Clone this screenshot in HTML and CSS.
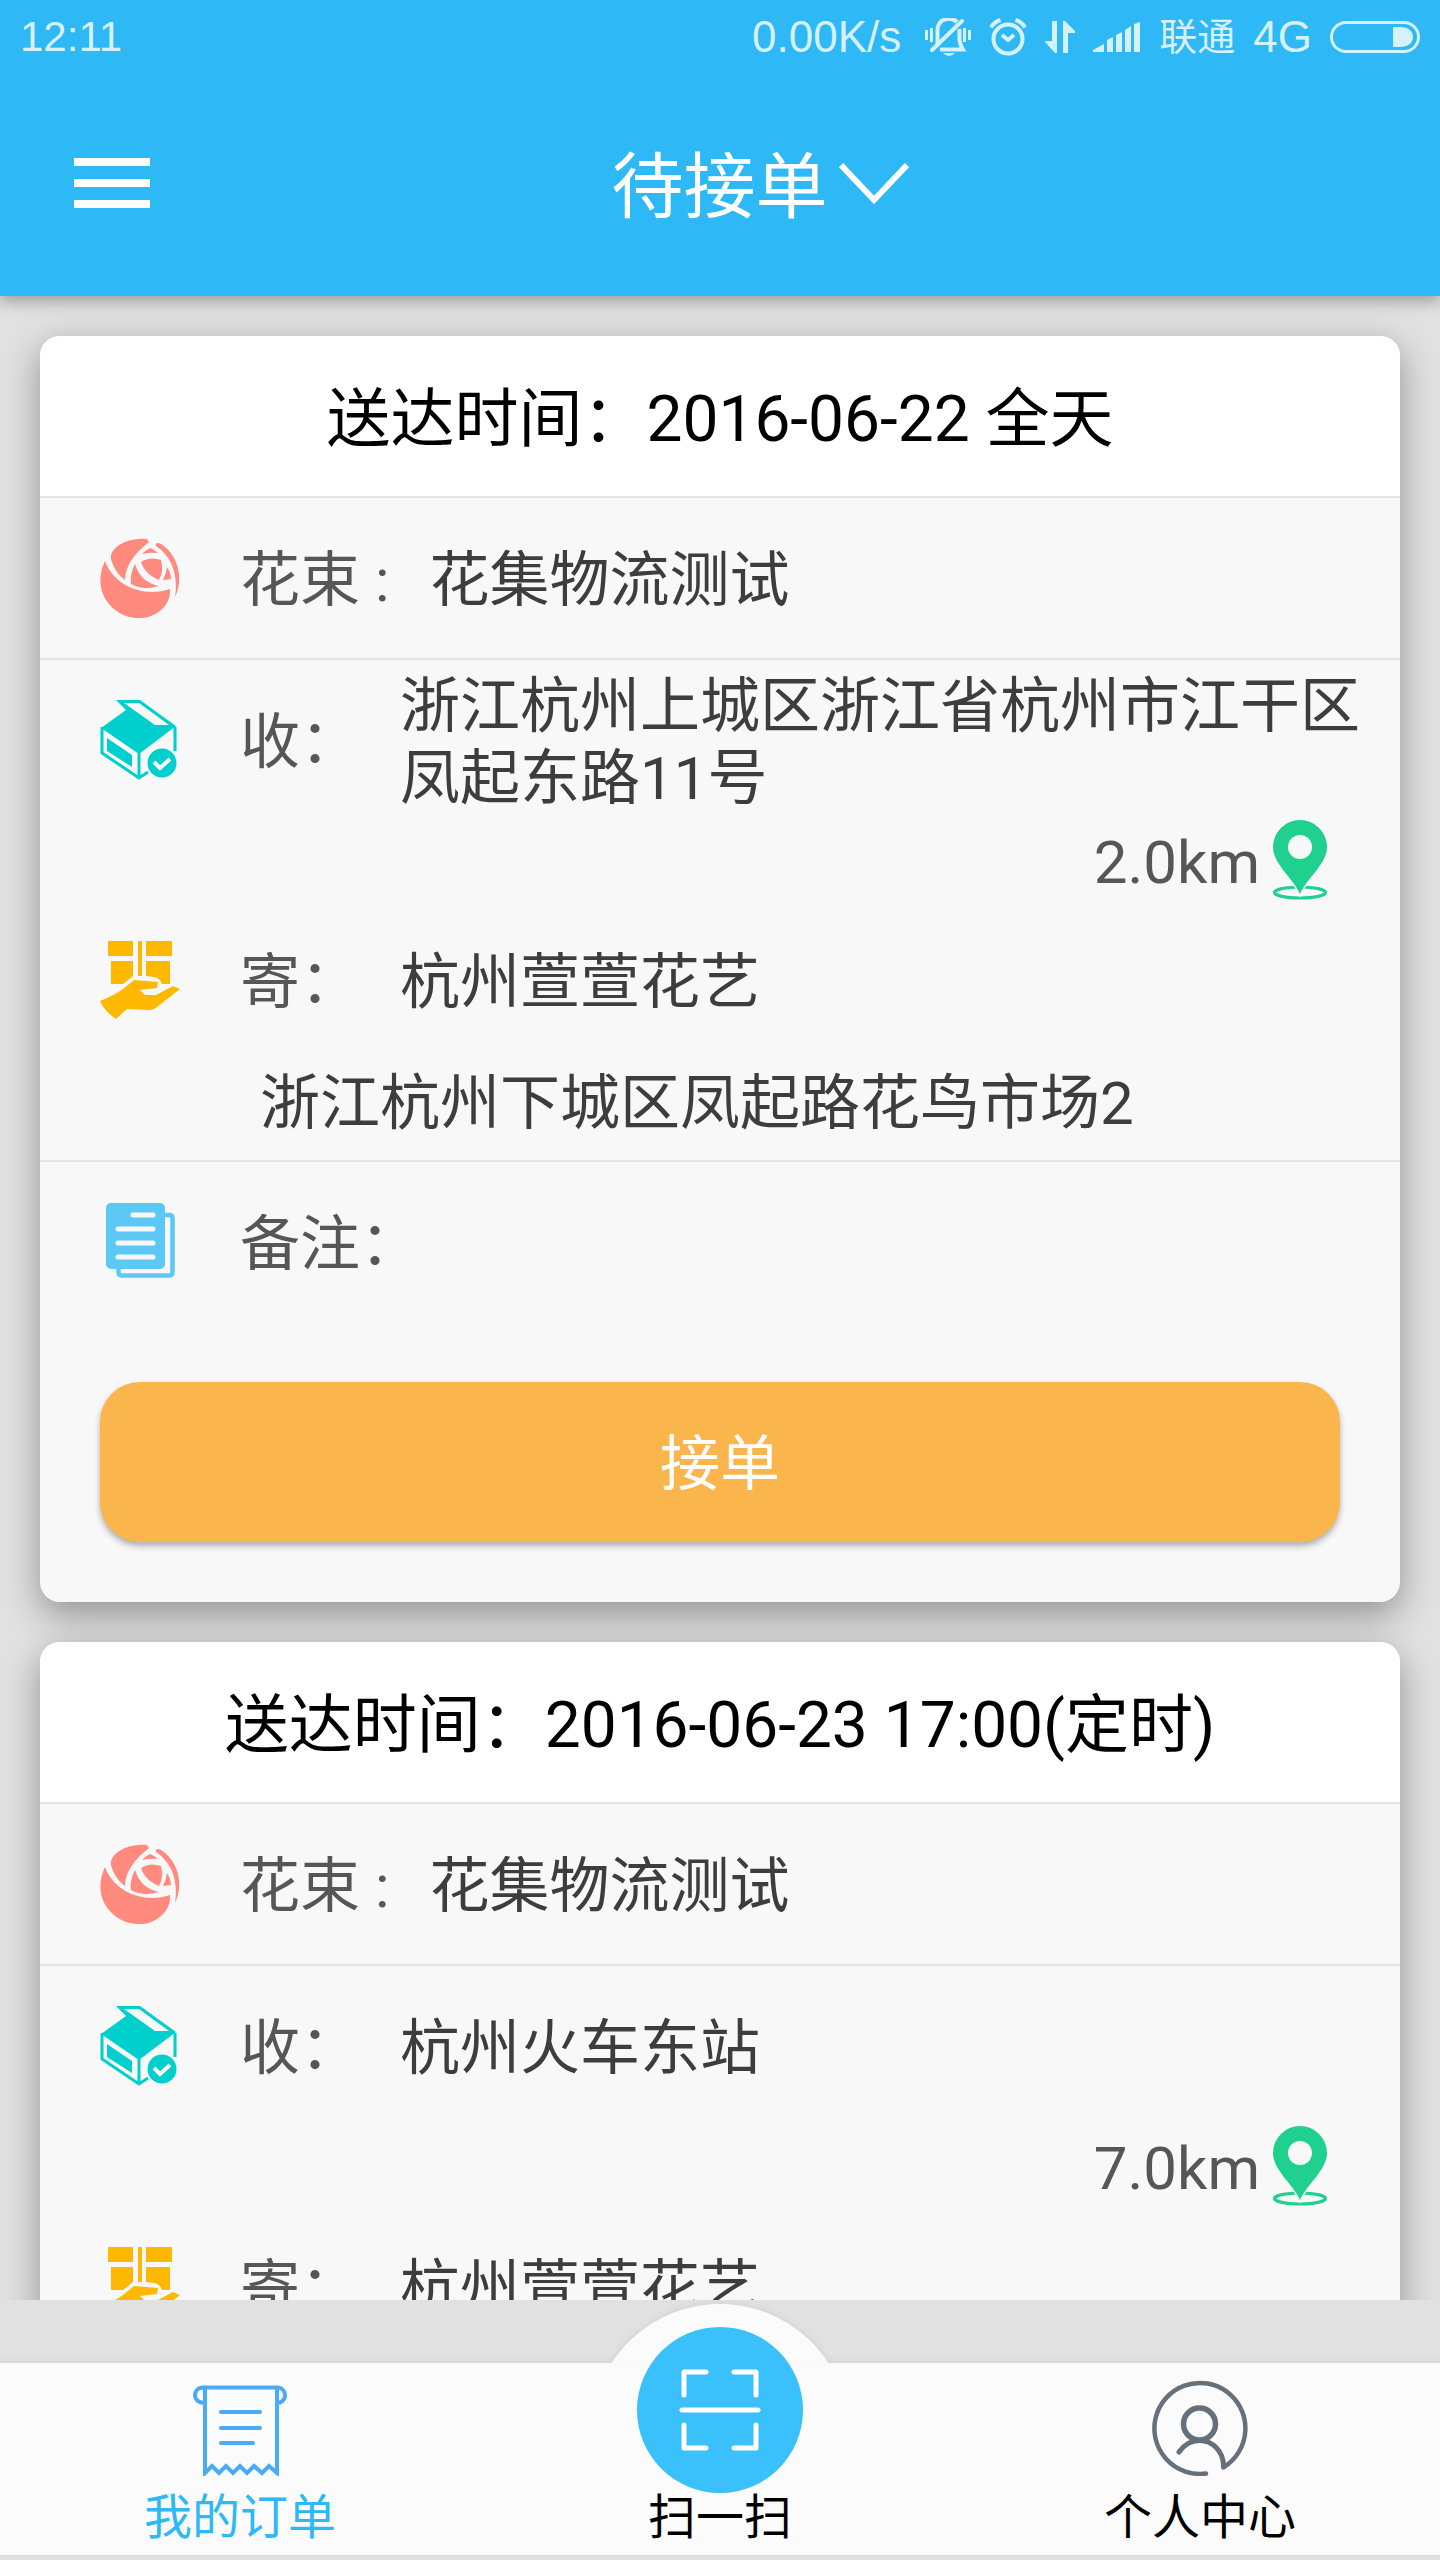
FILE: index.html
```
<!DOCTYPE html>
<html lang="zh-CN">
<head>
<meta charset="utf-8">
<meta name="viewport" content="width=device-width, initial-scale=1">
<title>待接单</title>
<link rel="stylesheet" href="styles.css">
</head>
<body>
<svg class="sprite" aria-hidden="true">
  <symbol id="rose" viewBox="0 0 80 80">
    <path d="M5 23C-4 42 0 62 18 74C44 90 72 72 70 51C44 60 14 48 5 23Z"/>
    <path d="M11 21C9 10 27 -1 47 1L49 4C36 14 25 27 25 42C18 37 13 29 11 21Z"/>
    <path d="M56 8C55 5 58 4 61 6C76 15 85 38 75 59C78 40 74 20 56 8Z"/>
    <path d="M42 16Q46 12 50 10Q55 12 58 15Q50 14 42 16Z"/>
    <path d="M41 24Q50 18 61 22Q64 33 59 42C50 38 44 33 41 24Z"/>
    <path d="M35 26C39 39 48 46 59 48Q43 53 31 46C30 38 32 32 35 26Z"/>
    <path d="M67 29Q71 35 71 41L63 42Q66 36 67 29Z"/>
  </symbol>
  <symbol id="box" viewBox="0 0 80 80">
    <path d="M1 28L26 10L16 0H40L76 26L39 54Z"/>
    <path class="paper" d="M24 3H39L69 25H55Z"/>
    <path class="line" d="M2 27V53L39 78L48 72M39 52V78M75 27V51" stroke-width="3"/>
    <path d="M7 38L32 55V67L7 51Z"/>
    <circle cx="62" cy="63" r="14.5"/>
    <path class="paper-line" d="M54 62L60 68L70 59" stroke-width="4"/>
  </symbol>
  <symbol id="hand" viewBox="0 0 80 80">
    <path d="M8 1H33V16H8ZM38 1H42V36H38ZM46 1H72V16H46ZM11 21H33V36L23 44H11ZM46 21H70V44H62Q60 38 54 37L46 36Z"/>
    <path d="M0 61Q13 56 23 49L34 40L58 42L57 48L40 50L45 55H56L73 46L80 49L57 67Q54 70 50 70L27 69L16 79Q5 72 0 61Z"/>
  </symbol>
  <symbol id="note" viewBox="0 0 80 80">
    <rect x="6" y="1" width="59" height="66" rx="5"/>
    <path class="line" d="M64 13H69Q72.500 13 72.500 16V70Q72.500 73.500 69 73.500H22Q18.500 73.500 18.500 70V66" stroke-width="4.500"/>
    <path class="paper-line" d="M33 13H53M18 27H53M18 41H53M18 55H53" stroke-width="5" stroke-linecap="round"/>
  </symbol>
  <symbol id="pin" viewBox="0 0 80 80">
    <ellipse class="line" cx="40" cy="72.500" rx="25.500" ry="5.500" stroke-width="3.200"/>
    <path d="M40 74C33 58 13 44 13 27A27 27 0 0 1 67 27C67 44 47 58 40 74Z" class="pin-body"/>
    <circle class="paper" cx="40" cy="27" r="12"/>
  </symbol>
</svg>

<div class="app">
  <header class="top">
    <div class="status">
      <span class="clock">12:11</span>
      <div class="status-right">
        <span class="status-text speed">0.00K/s</span>
        <svg class="si" width="46" height="38" viewBox="0 0 46 38">
          <path fill="none" stroke="currentColor" stroke-width="4" d="M12.500 26V12C13 -1 27 -1 32 4M34.500 11V22Q35 27 38 31.500H15"/>
          <path fill="none" stroke="currentColor" stroke-width="4" stroke-linecap="round" d="M7 32L37 3"/>
          <path d="M18 35H30Q24 41 18 35ZM0 12h3v10H0zM5 10h3v14H5zM38 10h3v14h-3zM43 12h3v10h-3z"/>
        </svg>
        <svg class="si" width="38" height="38" viewBox="0 0 38 38">
          <g fill="none" stroke="currentColor" stroke-width="4"><circle cx="19" cy="21" r="14.500"/><path d="M13 17L19 22L25 17M2 9.500Q5 4 11.500 2M36 9.500Q33 4 26.500 2"/></g>
        </svg>
        <svg class="si" width="30" height="32" viewBox="0 0 30 32"><path d="M7 0H12V32H10L0 21V20H7ZM18 0H20L30 10V12H23V32H18Z"/></svg>
        <svg class="si" width="48" height="30" viewBox="0 0 48 30"><path d="M0 30V28L11 22V30ZM14 30V18L20 15V30ZM23 30V13L29 10V30ZM32 30V8L38 4V30ZM41 30V2L47 0V30Z"/></svg>
        <span class="carrier">联通</span>
        <span class="status-text">4G</span>
        <svg class="si" width="90" height="32" viewBox="0 0 90 32"><rect x="1.500" y="1.500" width="87" height="29" rx="14.500" fill="none" stroke="currentColor" stroke-width="3"/><path d="M63 6H70C78 6 83 10 83 16S78 26 70 26H63Z"/></svg>
      </div>
    </div>
    <div class="titlebar">
      <button class="menu" type="button" aria-label="菜单"><svg width="76" height="52" viewBox="0 0 76 52"><path fill="#fff" d="M0 0H76V8H0ZM0 21H76V29H0ZM0 42H76V50H0Z"/></svg></button>
      <label class="filter">
        <select aria-label="订单状态"><option>待接单</option></select>
        <svg width="70" height="44" viewBox="0 0 70 44"><path fill="none" stroke="#fff" stroke-width="6" d="M2 3L35 38L68 3"/></svg>
      </label>
    </div>
  </header>

  <main class="orders">
    <article class="card">
      <h2>送达时间：2016-06-22 全天</h2>
      <div class="row ruled">
        <svg class="icon rose"><use href="#rose"/></svg>
        <span class="label">花束 :</span><span class="value">花集物流测试</span>
      </div>
      <div class="route">
        <div class="row">
          <svg class="icon teal"><use href="#box"/></svg>
          <span class="label">收：</span><span class="value">浙江杭州上城区浙江省杭州市江干区凤起东路11号</span>
        </div>
        <div class="distance"><span class="value">2.0km</span><svg class="icon green"><use href="#pin"/></svg></div>
        <div class="row">
          <svg class="icon amber"><use href="#hand"/></svg>
          <span class="label">寄：</span><span class="value">杭州萱萱花艺</span>
        </div>
        <p class="address">浙江杭州下城区凤起路花鸟市场2</p>
      </div>
      <div class="row">
        <svg class="icon sky"><use href="#note"/></svg>
        <span class="label">备注：</span>
      </div>
      <button class="accept" type="button">接单</button>
    </article>

    <article class="card">
      <h2>送达时间：2016-06-23 17:00(定时)</h2>
      <div class="row ruled">
        <svg class="icon rose"><use href="#rose"/></svg>
        <span class="label">花束 :</span><span class="value">花集物流测试</span>
      </div>
      <div class="route">
        <div class="row">
          <svg class="icon teal"><use href="#box"/></svg>
          <span class="label">收：</span><span class="value">杭州火车东站</span>
        </div>
        <div class="distance"><span class="value">7.0km</span><svg class="icon green"><use href="#pin"/></svg></div>
        <div class="row">
          <svg class="icon amber"><use href="#hand"/></svg>
          <span class="label">寄：</span><span class="value">杭州萱萱花艺</span>
        </div>
      </div>
    </article>
  </main>

  <footer class="bottom">
    <nav class="tabs">
      <svg class="bulge" width="220" height="62" viewBox="0 0 220 62"><path d="M0 62Q2 61 3 58A129 129 0 0 1 217 58Q218 61 220 62Z"/></svg>
      <a class="tab active" href="#orders">
        <svg width="96" height="96" viewBox="0 0 96 96"><g fill="none" stroke="#48aaf8" stroke-width="4"><path d="M13 23C6 23 3 19 3 15.500C3 11 6 7.500 11 7.500H85C90 7.500 93 11 93 15.500C93 19 90 23 85 23M13 8V93L20 86L27 93L34 86L41 93L48 86L55 93L62 86L70 93L77 86L85 93V8"/><path stroke-linecap="round" d="M29 32H68M29 48H68M29 63H61"/></g></svg>
        <span>我的订单</span>
      </a>
      <a class="tab scan" href="#scan">
        <svg width="166" height="166" viewBox="0 0 166 166"><circle cx="83" cy="83" r="83" fill="#3ac0fa"/><path fill="none" stroke="#fff" stroke-width="5" stroke-linecap="round" stroke-linejoin="round" d="M47 68V45H69M97 45H119V68M119 98V121H97M69 121H47V98M45 83H121"/></svg>
        <span>扫一扫</span>
      </a>
      <a class="tab" href="#me">
        <svg width="96" height="96" viewBox="0 0 96 96"><g fill="none" stroke="#66707a" stroke-linecap="round" stroke-linejoin="round"><path stroke-width="4.500" d="M54 93.500A45.500 45.500 0 1 1 72 87"/><circle cx="47.500" cy="44" r="16" stroke-width="5.500"/><path stroke-width="5" d="M27 72C32 65 39 60.500 47.500 60.500C60 60.500 72 71 71.500 87"/></g></svg>
        <span>个人中心</span>
      </a>
    </nav>
  </footer>
</div>
</body>
</html>
```
FILE: styles.css
```
* { box-sizing: border-box; }

body {
  margin: 0;
  background: #e1e1e1;
  color: #3d3d3d;
  font: 60px/72px Roboto, "Noto Sans CJK SC", sans-serif;
}

h2, p { margin: 0; font-weight: 400; }
button, select { font: inherit; color: inherit; border: 0; padding: 0; background: none; }
svg { display: block; flex: none; }
.sprite { position: absolute; width: 0; height: 0; }

.app { display: flex; flex-direction: column; height: 100vh; }

/* Header */
.top {
  position: relative;
  z-index: 1;
  background: #2eb8f5;
  color: #fff;
  box-shadow: 0 4px 16px rgba(0, 0, 0, .35);
}
.status {
  display: flex;
  justify-content: space-between;
  align-items: center;
  height: 74px;
  padding: 0 20px;
  color: #d5f1fd;
}
.status-right { display: flex; align-items: center; gap: 18px; }
.clock, .status-text { font: 44px/48px "Liberation Sans", sans-serif; }
.clock { font-size: 42px; }
.speed { margin-right: 6px; }
.carrier { font-size: 38px; line-height: 48px; }
.si { fill: currentColor; }
.titlebar {
  display: grid;
  grid-template-columns: 1fr auto 1fr;
  align-items: center;
  height: 222px;
  padding: 0 74px 2px;
}
.menu { justify-self: start; }
.filter { display: flex; align-items: center; gap: 10px; padding-left: 80px; }
.filter select { appearance: none; padding-top: 8px; font-size: 72px; line-height: 96px; }

/* Order list */
.orders {
  flex: 1;
  min-height: 0;
  overflow: hidden auto;
  scrollbar-width: none;
  padding: 40px;
  display: flex;
  flex-direction: column;
  gap: 40px;
}
.card {
  flex: none;
  background: #f8f8f8;
  border-radius: 20px;
  box-shadow: 0 12px 36px rgba(0, 0, 0, .36);
}
.card h2 {
  height: 162px;
  padding-top: 4px;
  border-bottom: 2px solid #e5e5e5;
  border-radius: 20px 20px 0 0;
  background: #fff;
  color: #000;
  font-size: 64px;
  line-height: 160px;
  text-align: center;
}
.row { display: flex; align-items: center; min-height: 160px; padding: 0 20px 0 60px; }
.ruled, .route { border-bottom: 2px solid #e5e5e5; }
.ruled { min-height: 162px; }
.label, .value { padding-top: 6px; }
.label { margin: 0 40px 0 60px; color: #565656; white-space: nowrap; }
.distance {
  display: flex;
  justify-content: flex-end;
  align-items: center;
  height: 80px;
  padding-right: 60px;
  color: #565656;
}
.address { padding: 4px 20px 16px 220px; line-height: 80px; }
.accept {
  display: block;
  width: calc(100% - 120px);
  height: 160px;
  margin: 60px;
  padding-top: 6px;
  border-radius: 40px;
  background: #fab64c;
  color: #fff;
  box-shadow: 0 4px 6px rgba(0, 0, 0, .3);
}

.icon { width: 80px; height: 80px; fill: currentColor; }
.line { fill: none; stroke: currentColor; }
.paper { fill: #f8f8f8; }
.paper-line { fill: none; stroke: #f8f8f8; }
.pin-body { stroke: #f8f8f8; stroke-width: 3px; paint-order: stroke; }
.rose { color: #ff8a7d; }
.teal { color: #00cfcd; }
.green { color: #20d08e; }
.amber { color: #ffb800; }
.sky { color: #5bc8f5; }

/* Bottom tabs */
.bottom { padding: 63px 0 5px; }
.tabs {
  position: relative;
  display: grid;
  grid-template: 100% / repeat(3, 1fr);
  height: 192px;
  background: #fbfbfb;
  box-shadow: 0 -2px 8px rgba(0, 0, 0, .06);
}
.bulge {
  position: absolute;
  left: 50%;
  bottom: 100%;
  margin: 0 0 -2px -110px;
  fill: #fbfbfb;
  filter: drop-shadow(0 -3px 3px rgba(0, 0, 0, .04));
}
.tab {
  position: relative;
  display: flex;
  flex-direction: column;
  align-items: center;
  justify-content: flex-end;
  gap: 14px;
  min-height: 0;
  padding-bottom: 9px;
  color: #000;
  font-size: 48px;
  line-height: 56px;
  text-decoration: none;
}
.tab.active { color: #2eb8f5; }
.tab.scan { gap: 0; }
.scan svg { margin-bottom: -3px; }
```
